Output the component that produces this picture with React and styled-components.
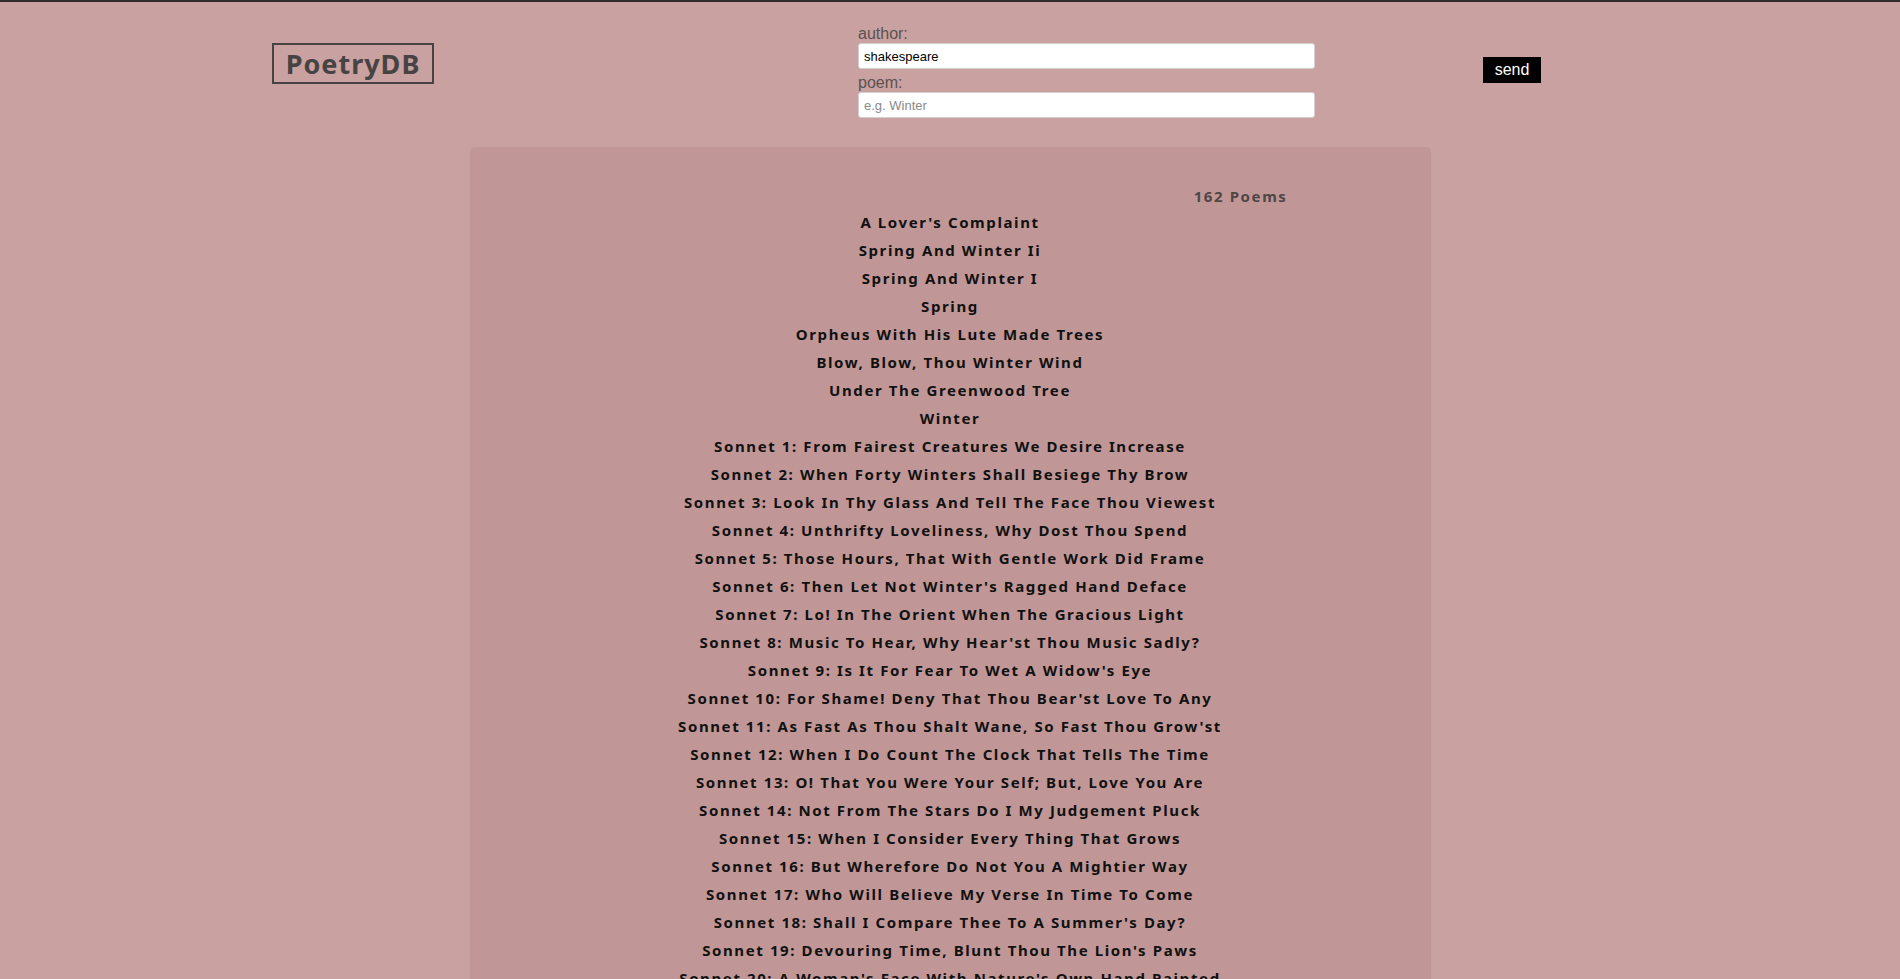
import React, { useState } from 'react';
import styled, { createGlobalStyle } from 'styled-components';

const GlobalStyle = createGlobalStyle`
  html, body {
    margin: 0;
    padding: 0;
  }
  body {
    background-color: #c9a1a0;
    border-top: 2px solid #2e2a2a;
    font-family: "Noto Sans", "Open Sans", sans-serif;
  }
`;

const Header = styled.header`
  display: flex;
  align-items: flex-start;
  padding: 17px 0 0 272px;
  height: 126px;
  box-sizing: border-box;
`;

const Logo = styled.h1`
  margin: 24px 0 0 0;
  width: 162px;
  height: 41px;
  box-sizing: border-box;
  border: 2px solid #474343;
  color: #474343;
  font-family: "Noto Sans", sans-serif;
  font-weight: 700;
  font-size: 27px;
  letter-spacing: 1px;
  line-height: 37px;
  text-align: center;
`;

const SearchForm = styled.form`
  display: flex;
  flex-direction: column;
  width: 457px;
  margin: 6px 0 0 424px;
`;

const Label = styled.label`
  font-family: "Liberation Sans", Arial, sans-serif;
  font-size: 16px;
  color: #5a5252;
  line-height: 18px;
  margin-top: ${({ first }) => (first ? '0' : '5px')};
`;

const Input = styled.input`
  height: 26px;
  box-sizing: border-box;
  border: 1px solid #d4d0d0;
  border-radius: 3px;
  background: #fff;
  padding: 0 5px;
  font-family: "Liberation Sans", Arial, sans-serif;
  font-size: 13px;
  color: #000;
  outline: none;

  &::placeholder {
    color: #8a8a8a;
  }
`;

const SendButton = styled.button`
  margin: 38px 0 0 168px;
  height: 26px;
  width: 58px;
  border: none;
  background: #000;
  color: #fff;
  font-family: "Liberation Sans", Arial, sans-serif;
  font-size: 16px;
  padding: 0;
  cursor: pointer;
`;

const Panel = styled.main`
  width: 961px;
  margin: 19px auto 0;
  background-color: #c09796;
  border-radius: 5px;
  padding: 37px 0 40px;
  box-sizing: border-box;
`;

const Count = styled.div`
  text-align: right;
  padding-right: 143px;
  font-weight: 700;
  font-size: 15px;
  letter-spacing: 1.6px;
  color: #4f4646;
  line-height: 24px;
`;

const PoemList = styled.ul`
  list-style: none;
  margin: 0;
  padding: 0;
  text-align: center;
`;

const PoemItem = styled.li`
  font-weight: 700;
  font-size: 15px;
  letter-spacing: 1.6px;
  color: #111;
  line-height: 28px;
  cursor: pointer;
`;

const poems = [
  "A Lover's Complaint",
  'Spring And Winter Ii',
  'Spring And Winter I',
  'Spring',
  'Orpheus With His Lute Made Trees',
  'Blow, Blow, Thou Winter Wind',
  'Under The Greenwood Tree',
  'Winter',
  'Sonnet 1: From Fairest Creatures We Desire Increase',
  'Sonnet 2: When Forty Winters Shall Besiege Thy Brow',
  'Sonnet 3: Look In Thy Glass And Tell The Face Thou Viewest',
  'Sonnet 4: Unthrifty Loveliness, Why Dost Thou Spend',
  'Sonnet 5: Those Hours, That With Gentle Work Did Frame',
  "Sonnet 6: Then Let Not Winter's Ragged Hand Deface",
  'Sonnet 7: Lo! In The Orient When The Gracious Light',
  "Sonnet 8: Music To Hear, Why Hear'st Thou Music Sadly?",
  "Sonnet 9: Is It For Fear To Wet A Widow's Eye",
  "Sonnet 10: For Shame! Deny That Thou Bear'st Love To Any",
  "Sonnet 11: As Fast As Thou Shalt Wane, So Fast Thou Grow'st",
  'Sonnet 12: When I Do Count The Clock That Tells The Time',
  'Sonnet 13: O! That You Were Your Self; But, Love You Are',
  'Sonnet 14: Not From The Stars Do I My Judgement Pluck',
  'Sonnet 15: When I Consider Every Thing That Grows',
  'Sonnet 16: But Wherefore Do Not You A Mightier Way',
  'Sonnet 17: Who Will Believe My Verse In Time To Come',
  "Sonnet 18: Shall I Compare Thee To A Summer's Day?",
  "Sonnet 19: Devouring Time, Blunt Thou The Lion's Paws",
  "Sonnet 20: A Woman's Face With Nature's Own Hand Painted",
  'Sonnet 21: So It Is Not With Me As With That Muse',
  'Sonnet 22: My Glass Shall Not Persuade Me I Am Old',
  'Sonnet 23: As An Unperfect Actor On The Stage',
  "Sonnet 24: Mine Eye Hath Play'd The Painter And Hath Stell'd",
];

export default function App() {
  const [author, setAuthor] = useState('shakespeare');
  const [poem, setPoem] = useState('');

  return (
    <>
      <GlobalStyle />
      <Header>
        <Logo>PoetryDB</Logo>
        <SearchForm onSubmit={(e) => e.preventDefault()}>
          <Label first htmlFor="author">author:</Label>
          <Input id="author" value={author} onChange={(e) => setAuthor(e.target.value)} />
          <Label htmlFor="poem">poem:</Label>
          <Input id="poem" placeholder="e.g. Winter" value={poem} onChange={(e) => setPoem(e.target.value)} />
        </SearchForm>
        <SendButton type="button">send</SendButton>
      </Header>
      <Panel>
        <Count>162 Poems</Count>
        <PoemList>
          {poems.map((title) => (
            <PoemItem key={title}>{title}</PoemItem>
          ))}
        </PoemList>
      </Panel>
    </>
  );
}
